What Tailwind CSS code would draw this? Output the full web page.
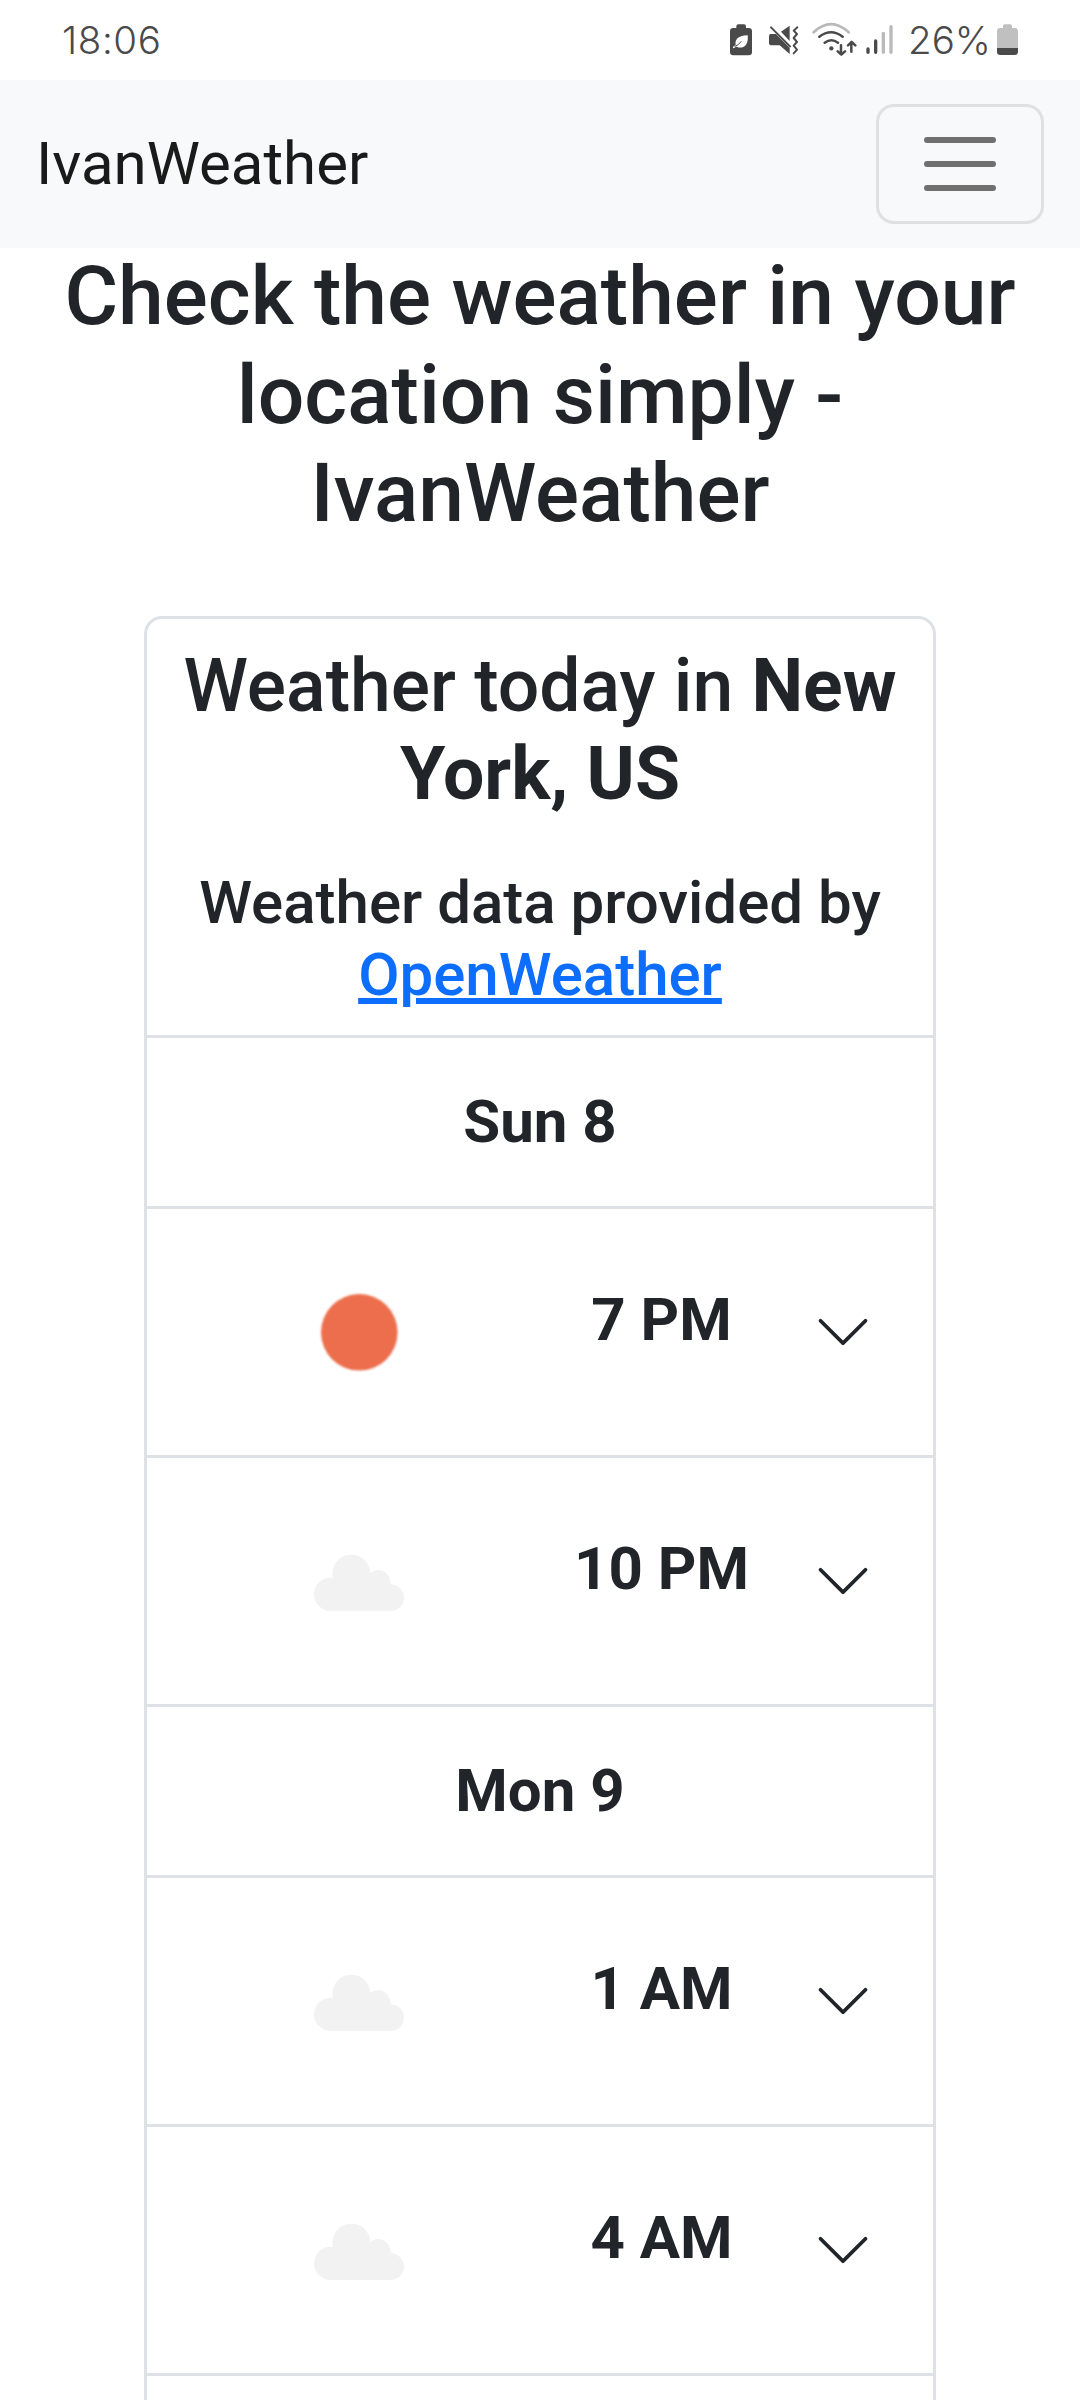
<!DOCTYPE html>
<html lang="en">
<head>
<meta charset="utf-8">
<title>IvanWeather</title>
<script src="https://cdn.jsdelivr.net/npm/@tailwindcss/browser@4"></script>
</head>
<body class="bg-white">
<svg class="hidden">
  <symbol id="cloud" viewBox="15 -44 450 450">
    <g fill="#f2f2f2"><circle cx="152" cy="221" r="50"/><circle cx="214" cy="159" r="57"/><circle cx="294" cy="184" r="36"/><circle cx="332" cy="231" r="40"/><rect x="152" y="180" width="180" height="91"/></g>
  </symbol>
  <symbol id="chevron" viewBox="0 0 16 16">
    <path fill-rule="evenodd" d="M1.646 4.646a.5.5 0 0 1 .708 0L8 10.293l5.646-5.647a.5.5 0 0 1 .708.708l-6 6a.5.5 0 0 1-.708 0l-6-6a.5.5 0 0 1 0-.708z"/>
  </symbol>
</svg>
<div class="h-[2400px] w-[1080px] overflow-hidden bg-white font-['Roboto',sans-serif] text-[#212529]">
  <header class="flex h-20 items-center pr-[61px] pl-[62px] text-[#4a4a4a]">
    <span class="font-['Inter',sans-serif] text-[38.5px] leading-none font-[350] tracking-[0.6px]">18:06</span>
    <div class="ml-auto flex h-20 items-center">
      <svg class="mr-[14px] h-20 w-6" viewBox="84 0 72 240">
        <path fill="#4a4a4a" d="M106 84v-5q0-6 6-6h17q6 0 6 6v5h8q10 0 10 10v62q0 10-10 10H97q-10 0-10-10V94q0-10 10-10z"/>
        <path fill="#fff" d="M140 106c2 17-2 30-13 35-8 3-15 2-20-1-4 1-6 4-11 5v-5c3-1 5-3 8-5-3-17 8-28 36-29z"/>
        <path d="M101 140q11-4 20-16" fill="none" stroke="#4a4a4a" stroke-width="3"/>
      </svg>
      <svg class="mr-3 h-20 w-[33px]" viewBox="198 0 99 240">
        <path fill="#4a4a4a" d="M266 77v46l-26-28zM208 102h17l41 41v19l-30-26h-24q-8 0-8-8v-18q0-8 4-8z"/>
        <path d="M210 82l57 57" fill="none" stroke="#4a4a4a" stroke-width="6" stroke-linecap="round"/>
        <path d="M217 80l52 52" fill="none" stroke="#fff" stroke-width="4"/>
        <path d="M289 81l-11 10 10 10-10 12 10 12-10 11 10 12-10 11" fill="none" stroke="#4a4a4a" stroke-width="6" stroke-linecap="round" stroke-linejoin="round" transform="translate(0 1)"/>
      </svg>
      <svg class="mr-2 h-20 w-[45px]" viewBox="333 0 135 240" fill="none" stroke-linecap="round" stroke-linejoin="round">
        <path d="M338 97Q390 48 443 97" stroke="#b9b9b9" stroke-width="8"/>
        <path d="M355 110q35-27 70 0M371 128q20-15 40 0M420 136v27M410 154l11 10 11-10M451 155v-29M441 136l11-10 11 10" stroke="#4a4a4a" stroke-width="7.5"/>
        <circle cx="391" cy="145" r="6.5" fill="#4a4a4a"/>
      </svg>
      <svg class="mr-[14px] h-20 w-[29px]" viewBox="492 0 87 240" stroke-width="10" stroke-linecap="round">
        <path d="M501 147v10M524 123v34" stroke="#4a4a4a"/>
        <path d="M547 100v57M570 80v77" stroke="#bababa"/>
      </svg>
      <span class="w-[83px] font-['Inter',sans-serif] text-[38.5px] leading-none font-[350]">26%</span>
      <svg class="ml-[5px] h-20 w-[23px]" viewBox="888 0 69 240">
        <path fill="#c0c0c0" d="M909 84v-6q0-5 5-5h17q5 0 5 5v6h8q10 0 10 10v51h-63V94q0-10 10-10z"/>
        <path fill="#4a4a4a" d="M891 144h63v12q0 9-10 9h-43q-10 0-10-9z"/>
      </svg>
    </div>
  </header>

  <nav class="flex h-[168px] items-center justify-between bg-[#f8f9fb] px-9">
    <a class="text-6xl leading-[90px] text-[#191a1a]">IvanWeather</a>
    <button class="flex h-[120px] w-[168px] flex-col items-center justify-center gap-[18px] rounded-[18px] border-3 border-[#dfe0e2]">
      <span class="h-1.5 w-[72px] rounded-full bg-[#707070]"></span>
      <span class="h-1.5 w-[72px] rounded-full bg-[#707070]"></span>
      <span class="h-1.5 w-[72px] rounded-full bg-[#707070]"></span>
    </button>
  </nav>

  <main class="px-9">
    <h1 class="-mt-px text-center text-[82.2px] leading-[98.64px] font-medium">Check the weather in your location simply - IvanWeather</h1>

    <section class="mx-auto mt-[73px] h-[1900px] w-[792px] rounded-t-[18px] border-3 border-[#dee2e6]">
      <div class="border-b-3 border-[#dee2e6] px-6 pt-[23px] pb-6 text-center">
        <h2 class="text-[73.3px] leading-[88px] font-medium">Weather today in <b class="font-bold">New York, US</b></h2>
        <h5 class="mt-[49px] text-6xl leading-[72px] font-medium">Weather data provided by <a class="text-[#0d6efd] underline decoration-6 underline-offset-3">OpenWeather</a></h5>
      </div>
      <div class="border-b-3 border-[#dee2e6] py-12 text-center text-6xl leading-[72px] font-bold">Sun 8</div>
      <div class="flex h-[249px] items-center border-b-3 border-[#dee2e6]">
        <div class="flex w-[426px] justify-center"><svg class="size-[150px] blur-[0.9px]" viewBox="0 0 150 150"><circle cx="74.3" cy="75.3" r="38.3" fill="#ec6e4c"/></svg></div>
        <div class="mb-6 w-[177px] text-center text-6xl leading-[72px] font-bold whitespace-nowrap">7 PM</div>
        <svg class="ml-[63px] size-[60px] fill-[#212529]"><use href="#chevron"/></svg>
      </div>
      <div class="flex h-[249px] items-center border-b-3 border-[#dee2e6]">
        <div class="flex w-[426px] justify-center"><svg class="size-[150px] blur-[0.7px]"><use href="#cloud"/></svg></div>
        <div class="mb-6 w-[177px] text-center text-6xl leading-[72px] font-bold whitespace-nowrap">10 PM</div>
        <svg class="ml-[63px] size-[60px] fill-[#212529]"><use href="#chevron"/></svg>
      </div>
      <div class="border-b-3 border-[#dee2e6] py-12 text-center text-6xl leading-[72px] font-bold">Mon 9</div>
      <div class="flex h-[249px] items-center border-b-3 border-[#dee2e6]">
        <div class="flex w-[426px] justify-center"><svg class="size-[150px] blur-[0.7px]"><use href="#cloud"/></svg></div>
        <div class="mb-6 w-[177px] text-center text-6xl leading-[72px] font-bold whitespace-nowrap">1 AM</div>
        <svg class="ml-[63px] size-[60px] fill-[#212529]"><use href="#chevron"/></svg>
      </div>
      <div class="flex h-[249px] items-center border-b-3 border-[#dee2e6]">
        <div class="flex w-[426px] justify-center"><svg class="size-[150px] blur-[0.7px]"><use href="#cloud"/></svg></div>
        <div class="mb-6 w-[177px] text-center text-6xl leading-[72px] font-bold whitespace-nowrap">4 AM</div>
        <svg class="ml-[63px] size-[60px] fill-[#212529]"><use href="#chevron"/></svg>
      </div>
    </section>
  </main>
</div>
</body>
</html>
